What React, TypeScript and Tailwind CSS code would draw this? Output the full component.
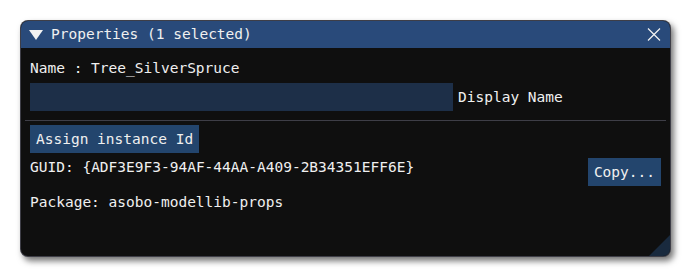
import React from "react";

export default function App() {
  const font = { fontFamily: '"DejaVu Sans Mono", "Liberation Mono", monospace' };
  return (
    <div className="w-[691px] h-[279px] bg-white pt-[20px] pl-[20px]">
      <div
        className="relative w-[651px] h-[237px] rounded-[8px] overflow-hidden bg-[#0f0f0f] text-[#f0f0f0] text-[14.5px] leading-[17px] border border-[rgba(110,110,128,0.5)] shadow-[3px_4px_6px_rgba(0,0,0,0.55)]"
        style={font}
      >
        <div className="h-[28px] -mt-px -mx-px bg-[#294a7a] flex items-center pl-[9px] pr-[9px]">
          <svg width="14" height="10" viewBox="0 0 14 10" className="mr-[8px] mt-[1px]">
            <polygon points="0,0 14,0 7,10" fill="#f2f2f2" />
          </svg>
          <span className="flex-1">Properties (1 selected)</span>
          <svg width="14" height="13" viewBox="0 0 14 13" className="mr-[1px]">
            <path d="M1 0.5 L13 12.5 M13 0.5 L1 12.5" stroke="#f2f2f2" strokeWidth="1.2" />
          </svg>
        </div>
        <div className="flex flex-col px-[9px]">
          <div className="mt-[12px]">Name : Tree_SilverSpruce</div>
          <div className="mt-[6px] flex items-center">
            <div className="w-[423px] h-[28px] bg-[#1d2f48]" />
            <span className="ml-[5px]">Display Name</span>
          </div>
          <div className="mt-[9px] -mx-[5px] h-px bg-[#3e3e47]" />
          <div className="mt-[4px] flex">
            <div className="h-[28px] px-[6px] bg-[#23456d] flex items-center">Assign instance Id</div>
          </div>
          <div className="mt-[5px] flex items-start justify-between">
            <span className="mt-[1px]">GUID: {"{"}ADF3E9F3-94AF-44AA-A409-2B34351EFF6E{"}"}</span>
            <div className="h-[28px] px-[6px] bg-[#23456d] flex items-center">Copy...</div>
          </div>
          <div className="mt-[8px]">Package: asobo-modellib-props</div>
        </div>
        <svg width="21" height="21" viewBox="0 0 21 21" className="absolute right-0 bottom-0">
          <polygon points="21,0 21,21 0,21" fill="#192a3e" />
        </svg>
      </div>
    </div>
  );
}
